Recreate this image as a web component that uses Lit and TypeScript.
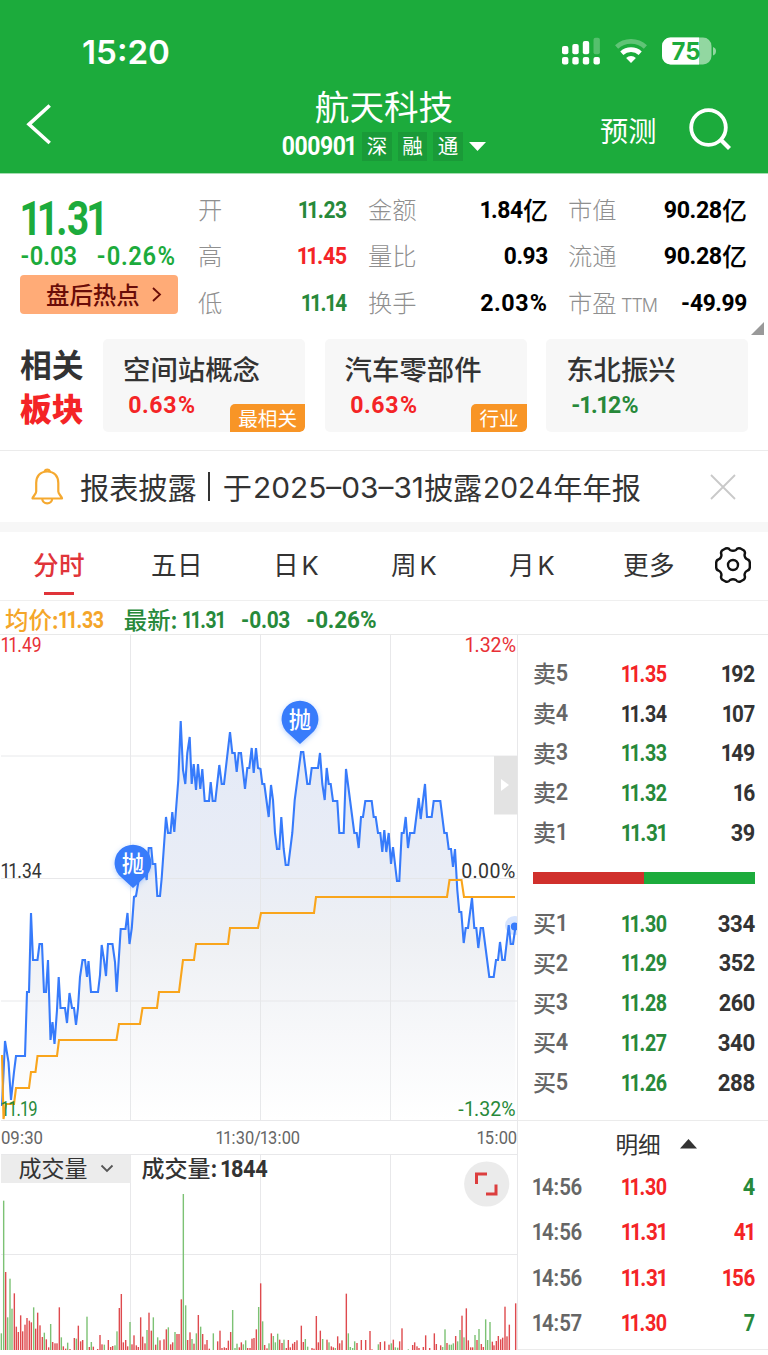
import { LitElement, html, svg, css } from "lit";
import { customElement } from "lit/decorators.js";

const RED = "#f42426";
const GREEN = "#27893a";

// Advance widths of a narrow numeral set, used to space figures evenly.
const ADV: Record<string, number> = { "1": 9.7, ".": 6, "-": 8.8, "%": 16.4, ":": 6.2, "/": 8.6 };
const advance = (c: string) => ADV[c] ?? 12;

// Condensed figures as live text; cap is the height of the digits in pixels.
function figureText(text: string, x: number, base: number, width: number, cap: number, color: string, weight: number) {
  const size = cap / 0.711;
  const k = width / [...text].reduce((a, c) => a + advance(c), 0);
  const squeeze = Math.min(0.94, ((12 * k) / (0.57 * size)) * 1.03);
  let pos = 0;
  const xs = [...text]
    .map((c) => {
      const mid = (pos + advance(c) / 2) * k;
      pos += advance(c);
      return (mid / squeeze).toFixed(2);
    })
    .join(" ");
  return svg`<text transform="translate(${x} ${base - 0.3}) scale(${squeeze.toFixed(3)} 1)" x=${xs} y="0" text-anchor="middle"
    font-family="Roboto, sans-serif" font-size=${size} font-weight=${weight} fill=${color}>${text}</text>`;
}

function fig(text: string, width: number, cap: number, color = "#000", weight = 700) {
  return html`<svg class="fig" width=${width} height=${cap}>${figureText(text, 0, cap, width, cap, color, weight)}</svg>`;
}

const PRICE =
  "2,1106 5,1041 8.5,1062 11,1100 14,1072 16,1056 25,1056 27,992 29,992 31,913 33,960 37.5,960 39.5,944 42,944 44,992 46,992 48,960 50.5,1040 52.5,1022 54.5,1044 57,1010 58.7,977 60.5,1008 65,1008 67,1023 69.5,993 72,1008 74,1008 76,1025 78,1008 80,977 82.5,960 85,960 87,977 88.5,961 91,992 98,992 100,975 101.7,945 104,960 106,976 108,944 112.5,944 115,962 116.7,992 120.7,929 125.5,929 127.5,913 129.5,944 131.8,928 134,897 136,896 138,884 142,864 144,864 146.7,880 148.7,848 151.3,848 152.7,864 155.3,864 157.3,896 160,896 161.7,878 166,817 168,833 170.5,833 172.3,812 174.3,832 178.3,780 180.7,721 183,770 185.3,784 187.3,753 189.7,737 191.7,784 193.7,764 196,790 198,764 200.3,789 202.3,769 204.7,801 209,801 210.7,782 212.7,801 215.3,801 219.3,765 221.7,784 224,784 230,732 232.3,753 234.7,753 236.7,772 238.7,753 241,753 245,789 247.3,768 249.3,768 251.7,748 253.7,773 256,748 258,768 260.5,769 262.3,784 264.3,784 268.7,817 271,785 273,800 275,833 277,849 279.3,849 281.3,817 283.7,849 285.7,865 288.3,865 292.3,833 294.7,800 301,752 303.3,752 307.3,784 309.7,784 311.7,768 318,768 320,753 322.3,784 324.7,800 326.7,768 328.7,784 330.7,784 333,801 337.3,801 339.3,833 343.7,833 346,769 354.3,833 356.7,833 358.7,848 361,817 363,817 365.3,801 371.7,801 373.7,817 375.7,817 378,833 380.3,833 382.3,852 384.3,830 386.3,852 388.7,833 391,864 393,847 397,881 399.3,881 401.7,833 403.7,833 405.7,817 408,848 410,833 414.3,833 418.7,798 420.7,819 425,784 427,817 431.7,817 433.7,801 440.3,801 444.3,833 446.7,833 448.7,849 451,849 453,867 455,849 457.3,890 459.3,912 461.3,912 463.7,943 465.7,928 468,928 472,898 474.3,928 476.3,928 478.3,948 480.7,928 483,928 489.3,977 493.7,977 496,960 498,960 500,942 502.3,960 504.7,960 508.7,925 510.7,944 513,944 515.3,928";
const AVERAGE =
  "2,1055 3.5,1119 6,1104 14,1104 16,1088 29,1088 31,1072 35.5,1072 37.5,1056 57,1056 59,1040 116.5,1040 119,1024 140,1024 142.5,1008 157,1008 159,992 179,992 183,960 194,960 196,944 228,944 230,928 258,928 261,913 314,913 316,897 447,897 449.5,880 461.5,880 464,897 515,897";

// Volume bars: minute position in thirds of a pixel, bar height in the same unit, direction.
const VOLUME =
  "4,50g 11,448g 17,234r 23,98g 30,214g 36,124g 43,170r 49,70r 55,54r 62,104r 68,56r 75,76r 81,96r 88,88r 94,83r 101,128g 107,64r 113,112r 120,74r 127,39r 133,52g 139,32r 146,8r 152,78g 158,24r 165,20r 171,20r 178,128r 184,38g 190,11r 197,4r 203,22g 210,3r 223,36r 229,34g 235,73r 242,26r 248,30r 261,100g 268,9r 274,24g 280,10r 293,3r 300,45r 306,17r 313,16g 325,30r 332,9r 338,12r 345,14g 351,56g 358,126r 364,168r 370,23r 377,30r 383,11r 390,84g 396,17r 402,44r 409,14r 415,9r 422,98r 428,40r 435,20r 441,60g 447,112r 454,58r 460,98g 467,16r 473,38g 480,29r 492,32r 499,62r 505,68g 512,17r 518,23r 525,54g 531,48r 537,48r 544,152r 550,468g 557,134g 563,30r 570,53r 576,33g 582,19r 589,50g 595,105r 602,70g 608,48r 615,17r 621,30r 628,4r 640,50g 653,26r 660,58r 666,6r 673,8r 679,6r 685,28r 692,54r 698,120g 705,6g 711,19g 718,8r 724,23r 730,17g 737,29g 743,6r 750,6r 756,34r 762,36r 769,62r 776,129g " +
  "782,200r 788,86g 794,15r 801,5r 807,20g 814,50r 820,42g 826,23g 833,49g 839,31r 846,21r 852,31g 859,6r 865,30r 871,8r 878,19r 884,24r 891,29r 904,73r 910,24r 916,33g 923,10g 936,6r 942,4r 949,102r 955,23r 961,58r 968,33g 981,31r 987,23g 994,11r 1000,8r 1006,6g 1013,41r 1019,20r 1026,29r 1039,169r 1045,50g 1051,9g 1058,6g 1064,26g 1071,21r 1084,30r 1097,30r 1110,57r 1116,2r 1135,17g 1141,24r 1154,26r 1167,16r 1174,20g 1180,31r 1186,8g 1193,7g 1199,26r 1206,65r 1225,2g 1238,15r 1244,23r 1251,11r 1257,6r 1270,9r 1277,44r 1289,6r 1303,50r 1309,18r 1322,14r 1328,9g 1335,62g 1341,21r 1348,16g 1354,16g 1360,20g 1367,42r 1373,26g 1380,60g 1386,103r 1392,38g 1399,125r 1405,29r 1412,8r 1418,8r 1425,45g 1431,30r 1437,63g 1444,18r 1450,9r 1457,92g 1463,30g 1470,84g 1477,25r 1482,14r 1489,27r 1495,42r 1502,32r 1508,37r 1515,130r 1521,41r 1528,76r 1547,140r";

const GRID_X = [130.5, 260.5, 390.5];

const base = css`
  * { box-sizing: border-box; }
  svg { display: block; flex: none; overflow: visible; }
`;

@customElement("stock-header")
class StockHeader extends LitElement {
  static styles = [base, css`
    :host { display: block; height: 174px; background: #1cab3c; border-bottom: 1px solid #a5ddb1; color: #fff; }
    .status { height: 88px; padding: 14px 52px 0 82px; display: flex; justify-content: space-between; align-items: center; }
    .nav { height: 85px; display: grid; grid-template-columns: 200px 1fr 200px; align-items: start; }
    .back { padding: 17px 0 0 27px; }
    .mid { display: flex; flex-direction: column; align-items: center; }
    .name { font-size: 34.6px; line-height: 36px; height: 36px; margin-top: -1px; }
    .code { display: flex; align-items: center; height: 30px; margin-top: 8px; }
    .tag { width: 29.5px; height: 29px; line-height: 27px; text-align: center; font-size: 20.5px; background: #1a9a38; margin-left: 6px; }
    .down { margin-left: 6px; }
    .right { display: flex; align-items: center; padding: 18px 37px 0 32px; justify-content: space-between; height: 64px; }
    .guess { font-size: 28.2px; line-height: 30px; margin-top: 1px; }
  `];
  render() {
    return html`
      <div class="status">
        <svg width="90" height="26"><text x="0" y="25.500" font-family="Inter, sans-serif" font-weight="600" font-size="32.5" fill="#fff" textLength="88" lengthAdjust="spacingAndGlyphs">15:20</text></svg>
        <svg width="155" height="28" viewBox="561 37 155 28">
          <g fill="#fff">
            <rect x="562" y="57" width="6.4" height="7.5" rx="2"/><rect x="572.3" y="57" width="6.4" height="7.5" rx="2"/>
            <rect x="582.8" y="57" width="6.4" height="7.5" rx="2"/><rect x="593.5" y="57" width="6.4" height="7.5" rx="2"/>
            <rect x="562" y="46" width="6.4" height="8.3" rx="2"/><rect x="572.3" y="44" width="6.4" height="10.3" rx="2"/>
            <rect x="582.8" y="41" width="6.4" height="13.3" rx="2"/><rect x="593.5" y="37.7" width="6.4" height="16.6" rx="2" opacity=".25"/>
            <path d="M631 63 L626.1 58.1 A7 7 0 0 1 635.9 58.1 Z"/>
          </g>
          <path d="M621.8 53.2 A13.6 13.6 0 0 1 640.2 53.2" fill="none" stroke="#fff" stroke-width="4.6"/>
          <path d="M616.6 47 A21.2 21.2 0 0 1 645.4 47" fill="none" stroke="#fff" stroke-opacity=".3" stroke-width="4.6"/>
          <clipPath id="lvl"><rect x="661" y="37" width="38" height="28"/></clipPath>
          <rect x="662" y="37.5" width="49.5" height="27" rx="8.5" fill="#fff" opacity=".52"/>
          <rect x="662" y="37.5" width="49.5" height="27" rx="8.5" fill="#fff" clip-path="url(#lvl)"/>
          <path d="M713 47 Q716 48 716 51 Q716 54.500 713 55.500 Z" fill="#fff" opacity=".52"/>
          <text x="671.500" y="60" font-family="Inter, sans-serif" font-weight="700" font-size="24.500" fill="#1cab3c" textLength="29" lengthAdjust="spacingAndGlyphs">75</text>
        </svg>
      </div>
      <div class="nav">
        <div class="back"><svg width="25" height="42" viewBox="0 0 25 42"><path d="M22.700 .5 L2 19.300 L22.700 38" fill="none" stroke="#fff" stroke-width="3.600"/></svg></div>
        <div class="mid">
          <div class="name">航天科技</div>
          <div class="code">
            ${fig("000901", 74, 17.8, "#fff")}
            <span class="tag">深</span><span class="tag">融</span><span class="tag">通</span>
            <svg class="down" width="17" height="9"><path d="M0 0H17L8.500 9Z" fill="#fff"/></svg>
          </div>
        </div>
        <div class="right">
          <span class="guess">预测</span>
          <svg width="42" height="42" viewBox="0 0 42 42"><circle cx="19.500" cy="19.500" r="17.300" fill="none" stroke="#fff" stroke-width="3.800"/><path d="M31.500 31.500 L40.500 40.500" stroke="#fff" stroke-width="4.200"/></svg>
        </div>
      </div>`;
  }
}

@customElement("stock-quote")
class StockQuote extends LitElement {
  static styles = [base, css`
    :host { display: block; height: 165px; padding: 12px 4px 0 20px; }
    .wrap { display: flex; height: 152px; }
    .left { width: 178px; padding-top: 15px; }
    .price { padding-left: 1.500px; }
    .change { display: flex; gap: 19px; margin-top: 12px; }
    .hot { width: 157.5px; height: 39px; border-radius: 4px; background: #ffab77; color: #690c08; margin-top: 9.800px; display: flex; align-items: center; padding-left: 26px; gap: 12px; font-size: 23.400px; font-weight: 500; }
    .hot span { line-height: 30px; margin-top: -1px; }
    .grid { display: grid; grid-template-columns: 149px 21px 180px 20px 179px; grid-template-rows: repeat(3, 46.600px); }
    .cell { display: flex; justify-content: space-between; align-items: center; font-size: 24.300px; color: #8f8f8f; font-weight: 300; }
    .cell span { line-height: 30px; margin-top: -1px; }
    .val { display: flex; align-items: center; color: #000; }
    .val span { font-weight: 500; font-size: 25px; line-height: 30px; margin-top: -1px; }
    .lab { display: flex; align-items: center; gap: 4px; }
    .corner { align-self: flex-end; margin: 0 0 3px auto; }
  `];
  cell(label: string, v: string, w: number, color: string, unit = "", ttm = false) {
    return html`<div class="cell">
      <div class="lab"><span>${label}</span>${ttm ? html`<svg width="37" height="10"><text x="0" y="14.500" font-family="Inter, sans-serif" font-weight="300" font-size="18" fill="#8f8f8f" textLength="37">TTM</text></svg>` : ""}</div>
      <div class="val">${fig(v, w, 17.6, color)}${unit ? html`<span>${unit}</span>` : ""}</div>
    </div>`;
  }
  render() {
    return html`<div class="wrap">
      <div class="left">
        <div class="price">${fig("11.31", 84, 34, "#1cab3c")}</div>
        <div class="change">${fig("-0.03", 57, 18, "#1cab3c", 600)}${fig("-0.26%", 80, 18, "#1cab3c", 600)}</div>
        <div class="hot"><span>盘后热点</span><svg width="9" height="15"><path d="M1 1L8 7.500L1 14" fill="none" stroke="#690c08" stroke-width="1.800"/></svg></div>
      </div>
      <div class="grid">
        ${this.cell("开", "11.23", 48, GREEN)}<i></i>${this.cell("金额", "1.84", 42, "#000", "亿")}<i></i>${this.cell("市值", "90.28", 58, "#000", "亿")}
        ${this.cell("高", "11.45", 49, RED)}<i></i>${this.cell("量比", "0.93", 44, "#000")}<i></i>${this.cell("流通", "90.28", 58, "#000", "亿")}
        ${this.cell("低", "11.14", 45, GREEN)}<i></i>${this.cell("换手", "2.03%", 68, "#000")}<i></i>${this.cell("市盈", "-49.99", 66, "#000", "", true)}
      </div>
      <svg class="corner" width="13" height="13"><path d="M13 0V13H0Z" fill="#999"/></svg>
    </div>`;
  }
}

@customElement("stock-sectors")
class StockSectors extends LitElement {
  static styles = [base, css`
    :host { display: flex; height: 112px; padding-left: 20px; border-bottom: 1.500px solid #ebebeb; }
    .head { width: 83px; flex: none; font-weight: 700; font-size: 31.800px; line-height: 44px; color: #333; padding-top: 1.500px; }
    .head b { color: #f42426; display: block; }
    .cards { display: flex; gap: 19.600px; }
    .card { width: 202px; height: 92.500px; background: #f7f7f7; border-radius: 5px; padding: 13px 0 0 20px; flex: none; position: relative; overflow: hidden; }
    .title { font-size: 27.400px; font-weight: 500; line-height: 32px; color: #333; }
    .pct { margin: 11.500px 0 0 5px; }
    .badge { position: absolute; right: 0; bottom: 0; height: 27.500px; padding: 0 8px; line-height: 27px; font-size: 19.600px; color: #fff; background: #f89526; border-radius: 5px 0 5px 0; }
  `];
  card(t: string, p: string, w: number, color: string, badge = "") {
    return html`<div class="card"><div class="title">${t}</div><div class="pct">${fig(p, w, 17.5, color)}</div>${badge ? html`<span class="badge">${badge}</span>` : ""}</div>`;
  }
  render() {
    return html`<div class="head">相关<b>板块</b></div>
      <div class="cards">
        ${this.card("空间站概念", "0.63%", 68, RED, "最相关")}
        ${this.card("汽车零部件", "0.63%", 68, RED, "行业")}
        ${this.card("东北振兴", "-1.12%", 68, GREEN)}
      </div>`;
  }
}

@customElement("stock-notice")
class StockNotice extends LitElement {
  static styles = [base, css`
    :host { display: flex; align-items: center; height: 81px; padding: 0 32px 0 31px; border-bottom: 10px solid #f7f7f7; color: #333; }
    .text { display: flex; align-items: center; margin-left: 17px; font-size: 29.200px; flex: 1; }
    .text span { line-height: 36px; margin-top: -1px; }
    .bar { width: 2px; height: 29px; background: #333; margin: 0 13px 0 11px; }
    .text svg { margin-left: 1px; }
  `];
  num(t: string, w: number) {
    return html`<svg width=${w} height="21"><text x="0" y="21.500" font-family="Inter, sans-serif" font-weight="400" font-size="28.800" fill="#333" textLength=${w} lengthAdjust="spacingAndGlyphs">${t}</text></svg>`;
  }
  render() {
    return html`
      <svg width="32" height="37" viewBox="0 0 32 37" fill="none" stroke="#f5a930" stroke-width="2.200" stroke-linejoin="round">
        <path d="M13.500 3.500a3 3 0 0 1 5.500 0"/><path d="M16.200 3.500C9 3.500 5.200 8.500 5.200 15V23.500C5.200 26 2 28 1.500 30.500H31C30.500 28 27.300 26 27.300 23.500V15C27.300 8.500 23.500 3.500 16.200 3.500Z"/><path d="M11.200 30.500a5 4.800 0 0 0 10 0"/>
      </svg>
      <div class="text"><span>报表披露</span><i class="bar"></i><span>于</span>${this.num("2025–03–31", 171)}<span>披露</span>${this.num("2024", 70)}<span>年年报</span></div>
      <svg width="26" height="26"><path d="M1 1L25 25M25 1L1 25" stroke="#c9c9c9" stroke-width="1.800"/></svg>`;
  }
}

@customElement("stock-tabs")
class StockTabs extends LitElement {
  static styles = [base, css`
    :host { display: flex; height: 69px; align-items: flex-start; padding: 14px 17px 0 0; border-bottom: 1.500px solid #efefef; }
    .tab { width: 118.200px; height: 54px; text-align: center; font-size: 25.600px; line-height: 36px; color: #333; display: flex; flex-direction: column; align-items: center; letter-spacing: .3px; flex: none; margin-left: -.2px; }
    .on { color: #e0343a; font-weight: 500; }
    .on::after { content: ""; width: 29.500px; height: 3px; background: #e0343a; margin-top: 10px; }
    .k { letter-spacing: 3px; padding-left: 2px; }
    .k span { font-family: Inter, "Noto Sans CJK SC", sans-serif; letter-spacing: 0; }
    .gear { margin: 1px 0 0 auto; }
  `];
  render() {
    const k = (c: string) => html`<div class="tab k"><div>${c}<span>K</span></div></div>`;
    return html`<div class="tab on">分时</div><div class="tab">五日</div>${k("日")}${k("周")}${k("月")}
      <div class="tab">更多</div>
      <svg class="gear" width="36" height="36" viewBox="-18 -18 36 36" fill="none" stroke="#111" stroke-width="2.400" stroke-linejoin="round">
        <path d="M-7.500 -16.500Q-4.500 -17.500 -3 -15Q0 -13.500 3 -15Q4.500 -17.500 7.500 -16.500L11 -14.500Q12.700 -12.500 11.500 -10Q11.700 -6.700 14.500 -5.500Q16.500 -5 16.800 -2.500V2.500Q16.500 5 14.500 5.500Q11.700 6.700 11.500 10Q12.700 12.500 11 14.500L7.500 16.500Q4.500 17.500 3 15Q0 13.500 -3 15Q-4.500 17.500 -7.500 16.500L-11 14.500Q-12.700 12.500 -11.500 10Q-11.700 6.700 -14.500 5.500Q-16.500 5 -16.800 2.500V-2.500Q-16.500 -5 -14.500 -5.500Q-11.700 -6.700 -11.500 -10Q-12.700 -12.500 -11 -14.500Z"/>
        <circle r="5"/>
      </svg>`;
  }
}

@customElement("stock-summary")
class StockSummary extends LitElement {
  static styles = [base, css`
    :host { display: flex; height: 34px; align-items: center; padding: 3px 0 0 5px; font-size: 23.400px; font-weight: 500; color: #27893a; }
    span { line-height: 30px; margin-top: -2px; }
    .avg { color: #f4a62a; }
    .last { margin-left: 20px; }
    .change { display: flex; gap: 16px; margin-left: 5px; }
  `];
  render() {
    return html`<span class="avg">均价:</span>${fig("11.33", 45, 17, "#f4a62a")}
      <span class="last">最新:</span>
      <div class="change">${fig("11.31", 42, 17, GREEN)}${fig("-0.03", 49, 17, GREEN)}${fig("-0.26%", 71, 17, GREEN)}</div>`;
  }
}

@customElement("stock-chart")
class StockChart extends LitElement {
  static styles = [base, css`:host { display: block; width: 518px; }`];
  pin(x: number, y: number) {
    return svg`<g transform="translate(${x} ${y})"><path filter="url(#glow)" d="M0 25L-11.500 14.500A18.400 18.400 0 1 1 11.500 14.500Z" fill="#377bfb"/>
      <text x="0" y="8.500" text-anchor="middle" font-size="22.500" font-weight="500" fill="#fff">抛</text></g>`;
  }
  render() {
    const grid = "#e4e5e7";
    return html`<svg width="518" height="720" viewBox="0 635 518 720" font-family="'Noto Sans CJK SC', sans-serif">
      <defs>
        <linearGradient id="area" gradientUnits="userSpaceOnUse" x1="0" y1="720" x2="0" y2="1120">
          <stop offset="0" stop-color="#e3e9f7"/><stop offset=".38" stop-color="#e9edf6"/><stop offset=".55" stop-color="#eef0f4"/><stop offset="1" stop-color="#fff"/>
        </linearGradient>
        <filter id="glow" x="-50%" y="-50%" width="200%" height="200%"><feDropShadow dx="0" dy="1.500" stdDeviation="2.500" flood-color="#377bfb" flood-opacity=".35"/></filter>
        <clipPath id="plot"><rect x="0" y="635" width="517" height="486"/></clipPath>
      </defs>
      <polygon points="1,1120 ${PRICE} 515.300,1120" fill="url(#area)"/>
      <g stroke=${grid} stroke-width="1" opacity=".85">
        ${GRID_X.map((x) => svg`<path d="M${x} 635V1120.500M${x} 1154V1350"/>`)}
        <path d="M1 756H517M1 878.500H517M1 1001H517M1 1120.500H517M1 1154.500H517M1 1254.500H517"/>
        <path d="M517.500 635V1350"/>
      </g>
      <g clip-path="url(#plot)" fill="none" stroke-linejoin="miter" stroke-miterlimit="3">
        <polyline points=${PRICE} stroke="#377bfb" stroke-width="2.100"/>
        <polyline points=${AVERAGE} stroke="#f9a51c" stroke-width="2.100"/>
        <circle cx="514.500" cy="925.500" r="9.500" fill="#377bfb" opacity=".2"/><circle cx="514.800" cy="926.500" r="4" fill="#377bfb"/>
      </g>
      ${figureText("11.49", 1.5, 652.5, 40, 14.8, "#e83035", 400)}
      ${figureText("1.32%", 465.5, 652.5, 51, 14.8, "#e83035", 400)}
      ${figureText("11.34", 1.5, 878, 40, 14.8, "#333", 400)}
      ${figureText("0.00%", 461, 878, 55, 14.8, "#333", 400)}
      ${figureText("11.19", 1.5, 1116.5, 36, 14.8, GREEN, 400)}
      ${figureText("-1.32%", 457, 1116.5, 59, 14.8, GREEN, 400)}
      ${figureText("09:30", 1, 1144, 42, 13.6, "#666", 400)}
      ${figureText("11:30/13:00", 216.5, 1144, 83.5, 13.6, "#666", 400)}
      ${figureText("15:00", 477.5, 1144, 39.5, 13.6, "#666", 400)}
      ${this.pin(133, 863)}${this.pin(300, 719)}
      <rect x="494" y="756" width="23.500" height="58.500" fill="#e3e3e3"/><path d="M501 779V791L509 785Z" fill="#fff"/>
      <rect x="1" y="1155" width="129.500" height="28" fill="#ececec"/>
      <text x="18.500" y="1177" font-size="23" fill="#333">成交量</text>
      <path d="M101.500 1165.500L107 1171L112.500 1165.500" fill="none" stroke="#555" stroke-width="1.800"/>
      <text x="141.500" y="1177" font-size="23" font-weight="500" fill="#333">成交量:</text>
      ${figureText("1844", 221.5, 1177.7, 46, 16.5, "#333", 700)}
      <circle cx="486.700" cy="1184" r="22.600" fill="#ebebeb"/>
      <path d="M476.500 1184V1174H487M486 1194H496V1184.500" fill="none" stroke="#dc3e3e" stroke-width="3"/>
      ${VOLUME.split(" ").map((b) => {
        const [x, rest] = b.split(",");
        const h = parseFloat(rest) / 3;
        return svg`<rect x=${Number(x) / 3 - 0.7} y=${1350 - h} width="1.400" height=${h} fill=${rest.endsWith("g") ? "#7cc274" : "#de4a4e"}/>`;
      })}
    </svg>`;
  }
}

const BOOK = {
  sell: [["卖5", "11.35", 192, 33, "r"], ["卖4", "11.34", 107, 32, "k"], ["卖3", "11.33", 149, 33, "g"], ["卖2", "11.32", 16, 21, "g"], ["卖1", "11.31", 39, 24, "g"]],
  buy: [["买1", "11.30", 334, 37, "g"], ["买2", "11.29", 352, 36, "g"], ["买3", "11.28", 260, 36, "g"], ["买4", "11.27", 340, 37, "g"], ["买5", "11.26", 288, 37, "g"]],
};
const TRADES = [["14:56", "11.30", 4, 12, "r", "g"], ["14:56", "11.31", 41, 21, "r", "r"], ["14:56", "11.31", 156, 32, "r", "r"], ["14:57", "11.30", 7, 11, "r", "g"]];
const TONE: Record<string, string> = { r: RED, g: GREEN, k: "#333" };

@customElement("order-book")
class OrderBook extends LitElement {
  static styles = [base, css`
    :host { display: block; width: 250px; padding-top: 18.500px; }
    .row { display: grid; grid-template-columns: 74px 74px 74px; align-items: center; height: 39.700px; padding-left: 15px; color: #666; font-size: 23px; font-weight: 500; }
    .row > :nth-child(2) { justify-self: center; }
    .row > :nth-child(3) { justify-self: end; }
    .name { display: flex; align-items: center; }
    .name span { line-height: 30px; margin-top: -2px; }
    .ratio { display: flex; height: 12px; margin: 20px 13px 19.500px 15px; }
    .ratio i { flex: 1; background: #d0302c; }
    .ratio i + i { background: #1cab3c; }
    .detail { display: flex; align-items: center; justify-content: center; gap: 19px; height: 43.500px; border-top: 1.500px solid #ebebeb; margin-top: 18px; padding-left: 26px; font-size: 22.600px; color: #333; }
    .detail span { margin-top: 4px; line-height: 30px; }
    .detail svg { margin-top: 4px; }
    .trade { height: 45.500px; }
    .end { border-top: 1px solid #ebebeb; margin-top: 3.500px; }
  `];
  level(r: any[]) {
    return html`<div class="row"><div class="name"><span>${r[0][0]}</span>${fig(r[0][1], 12, 16.5, "#666", 600)}</div>${fig(r[1], 45, 17, TONE[r[4]])}${fig(String(r[2]), r[3], 17, "#333")}</div>`;
  }
  render() {
    return html`${BOOK.sell.map((r) => this.level(r))}
      <div class="ratio"><i></i><i></i></div>
      ${BOOK.buy.map((r) => this.level(r))}
      <div class="detail"><span>明细</span><svg width="17" height="9.500"><path d="M8.500 0L17 9.500H0Z" fill="#333"/></svg></div>
      ${TRADES.map((t: any[]) => html`<div class="row trade">${fig(t[0], 49, 16.8, "#666", 600)}${fig(t[1], 45, 17, TONE[t[4]])}${fig(String(t[2]), t[3], 17, TONE[t[5]])}</div>`)}
      <div class="end"></div>`;
  }
}

@customElement("app-root")
class AppRoot extends LitElement {
  static styles = [base, css`
    :host { display: block; width: 768px; height: 1355px; overflow: hidden; background: #fff; font-family: "Noto Sans CJK SC", sans-serif; }
    .body { display: flex; height: 721px; margin-top: -1px; border-top: 1px solid #e9e9e9; }
  `];
  render() {
    return html`<stock-header></stock-header><stock-quote></stock-quote><stock-sectors></stock-sectors>
      <stock-notice></stock-notice><stock-tabs></stock-tabs><stock-summary></stock-summary>
      <div class="body"><stock-chart></stock-chart><order-book></order-book></div>`;
  }
}
